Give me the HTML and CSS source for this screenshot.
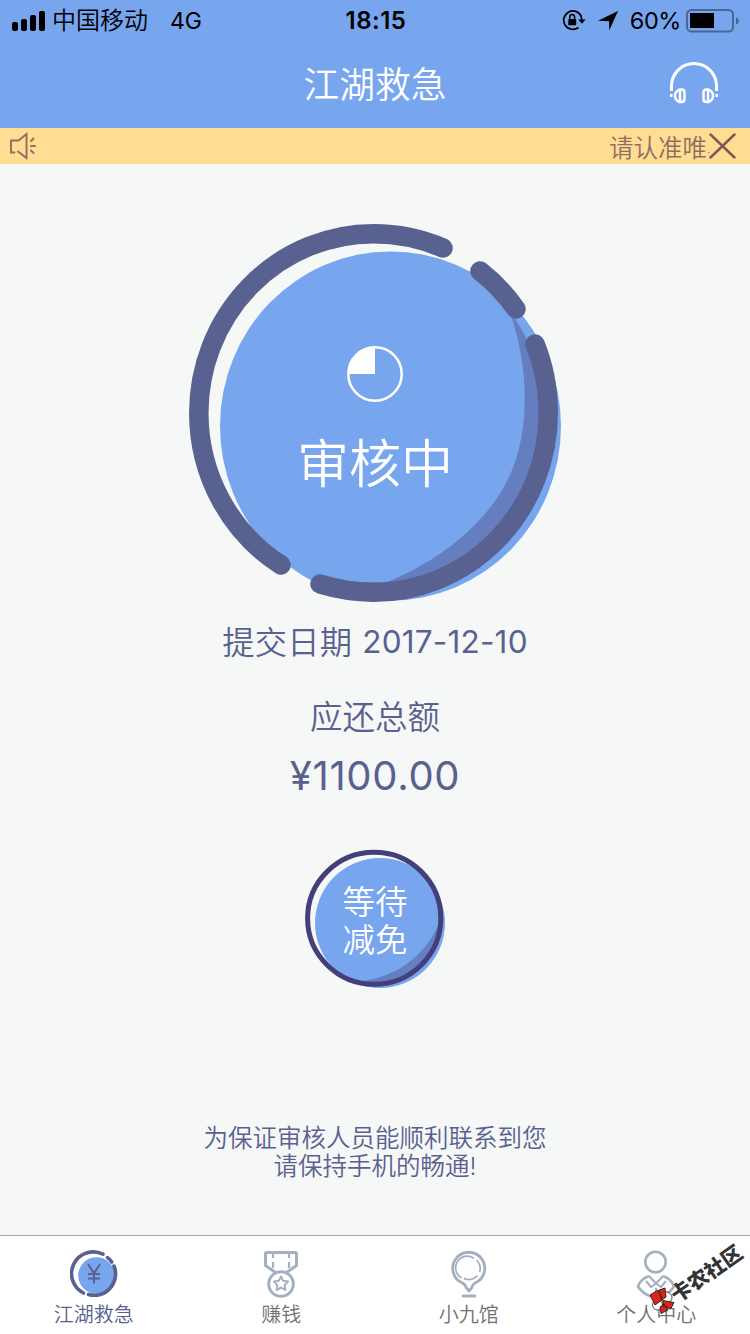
FILE: index.html
```html
<!DOCTYPE html>
<html lang="zh-CN">
<head>
<meta charset="utf-8">
<title>江湖救急</title>
<link rel="stylesheet" href="styles.css">
</head>
<body>
<div class="app">
  <header class="header">
    <div class="status">
      <div class="status-left">
        <svg class="signal" width="34" height="20" viewBox="0 0 34 20"><rect x="0" y="11" width="6" height="9" rx="2"/><rect x="9" y="8" width="6" height="12" rx="2"/><rect x="18" y="4" width="6" height="16" rx="2"/><rect x="27" y="0" width="6" height="20" rx="2"/></svg>
        <span class="carrier">中国移动</span>
        <span class="network">4G</span>
      </div>
      <div class="clock">18:15</div>
      <div class="status-right">
        <svg class="lock" width="24" height="22" viewBox="0 0 24 22"><path d="M19.2 6.2A9.2 9.2 0 1 0 16.5 17.5M17.6 3.8A9.2 9.2 0 0 1 19.7 10" fill="none" stroke="#000" stroke-width="1.7"/><path d="M16.2 9.4h7.4l-3.7 4.3z"/><rect x="6.2" y="9" width="8" height="6.3" rx="1"/><path d="M7.8 9.5V7a2.4 2.4 0 0 1 4.8 0v2.5" fill="none" stroke="#000" stroke-width="1.5"/></svg>
        <svg class="arrow" width="21" height="20" viewBox="0 0 21 20"><path d="M20 0 11.2 19.5V10.2L0 9.8z"/></svg>
        <span class="percent">60%</span>
        <svg class="battery" width="54" height="24" viewBox="0 0 54 24"><rect x="1" y="1" width="46" height="21.5" rx="4.5" fill="none" stroke="#496796" stroke-width="2"/><rect x="4" y="4" width="24" height="15"/><path d="M50 8.2c3.8 1 3.8 6.200 0 7.200z" fill="#496796"/></svg>
      </div>
    </div>
    <div class="titlebar">
      <h1 class="title">江湖救急</h1>
      <svg class="headset" width="50" height="44" viewBox="0 0 50 44" fill="none" stroke="#fff" stroke-width="3"><path d="M2.500 29V24a22.500 22.500 0 0 1 45 0v5"/><path d="M10.300 27.500h2.200q3 0 3 3v6.500q0 3-3 3h-2.200q-4.300-2-4.300-6.200t4.300-6.300zM11 27v13M39.700 27.500h-2.200q-3 0-3 3v6.500q0 3 3 3h2.200q4.300-2 4.300-6.200t-4.300-6.300zM39 27v13" stroke-width="2.500"/><path d="M1 33.500h2.500M46.500 33.500h2.500" stroke-width="3"/></svg>
    </div>
  </header>

  <div class="notice">
    <svg class="speaker" width="27" height="28" viewBox="0 0 27 28" fill="none" stroke="#8e6e60" stroke-width="1.900" stroke-linecap="round"><path d="M4.500 20.500H1V8.500h7.500L16.500 2v24L8 19.500"/><path d="m21 9 2.500-2.500M21 14h4M21 18.500l2.500 2.500"/></svg>
    <div class="marquee">请认准唯<span class="dot">·</span></div>
    <svg class="close" width="27" height="26" viewBox="0 0 27 26"><path d="m1.500 1.500 24 23M25.500 1.500l-24 23" stroke="#7c5b53" stroke-width="2.500" stroke-linecap="round"/></svg>
  </div>

  <main class="content">
    <section class="dial">
      <svg class="dial-art" width="374" height="380" viewBox="188 223 374 380">
        <ellipse cx="390.500" cy="426" rx="170.500" ry="174.500" fill="#77a6ee"/>
        <path d="M509 310C531 370 529 435 509 477C485 529 428 567 382 584C474 588 543 507 543.200 413C543.200 380 532 342 513 316z" fill="#657ebf"/>
        <g fill="none" stroke="#58618f" stroke-width="19.500" stroke-linecap="round"><path d="M281 565A174.700 179.300 0 0 1 198.800 413A174.700 179.300 0 0 1 373.500 233.700Q410 233.700 443 248"/><path d="M480 271A175 179.300 0 0 1 516 309"/><path d="M535 344Q548.200 376 548.200 413A174.700 179.300 0 0 1 373.500 592.300Q346 592 320 584"/></g>
      </svg>
      <div class="dial-label">
        <svg width="56" height="56" viewBox="0 0 56 56"><circle cx="28" cy="28" r="26.700" fill="none" stroke="#fff" stroke-width="2.500"/><path d="M28 28V1A27 27 0 0 0 1 28z" fill="#fff"/></svg>
        <strong class="state">审核中</strong>
      </div>
    </section>
    <p class="date"><span class="cn">提交日期</span><span>2017-12-10</span></p>
    <p class="due">应还总额</p>
    <p class="amount">¥1100.00</p>
    <button class="wait">
      <svg class="wait-art" width="142" height="140" viewBox="304 849 142 140"><circle cx="380" cy="923" r="65" fill="#77a6ee"/><path d="M361 981C397 978 429 953 441 918C440 963 401 990 361 981z" fill="#657ebf"/><ellipse cx="374.200" cy="918.300" rx="66.600" ry="66" fill="none" stroke="#443f7a" stroke-width="5"/></svg>
      <span class="wait-label">等待<br>减免</span>
    </button>
    <p class="tip">为保证审核人员能顺利联系到您<br>请保持手机的畅通!</p>
  </main>

  <nav class="tabs">
    <a class="tab active">
      <svg width="48" height="48" viewBox="0 0 48 48"><circle cx="26.500" cy="25.500" r="18.300" fill="#77a6ee"/><g fill="none" stroke="#58618f" stroke-width="3.600" stroke-linecap="round"><path d="M13.500 43A21.300 21.300 0 0 1 33 4.200"/><path d="M37.500 7.600Q40 9.400 41.800 12"/><path d="M44 16A21.300 21.300 0 0 1 18.500 44.500"/></g><path d="m18 14 6 9.500L30 14M24 23.500V33.500M18 24h12M18 28.500h12" fill="none" stroke="#58618f" stroke-width="2"/></svg>
      <span>江湖救急</span>
    </a>
    <a class="tab">
      <svg width="48" height="48" viewBox="0 0 48 48" fill="none" stroke="#a4afc1" stroke-width="3"><path d="M18.500 22.500 8.500 15.500V4q0-1.500 1.500-1.500h28q1.500 0 1.500 1.500v11.500l-10 7"/><path d="M16 4v4M16 12v6M32 4v4M32 12v6" stroke-width="2.200"/><circle cx="24" cy="34" r="12.300"/><path d="m24 26.500 2.200 4.300 4.900.8-3.500 3.500.8 4.900-4.400-2.300-4.400 2.300.8-4.900-3.500-3.500 4.900-.8z" stroke-width="2" stroke-linejoin="round"/></svg>
      <span>赚钱</span>
    </a>
    <a class="tab">
      <svg width="48" height="48" viewBox="0 0 48 48" fill="none" stroke="#a4afc1" stroke-width="2.800" stroke-linecap="round"><path d="M17.500 33a16 16 0 1 1 12.500 0Q28 34 26.500 38L24 41L21.500 38Q20 34 17.500 33z" stroke-linejoin="round"/><path d="M16 27.500A11.500 11.500 0 0 1 28.500 8M32 10.500a11.500 11.500 0 0 1 2.800 11M32 26a11.500 11.500 0 0 1-12.500 2.600" stroke-width="1.700"/><path d="M18 46h12"/></svg>
      <span>小九馆</span>
    </a>
    <a class="tab">
      <svg width="48" height="48" viewBox="0 0 48 48" fill="none" stroke="#a4afc1" stroke-width="2.600" stroke-linejoin="round"><circle cx="23.500" cy="12" r="10.200"/><path d="M17 26Q8.500 29 6 36.500Q10.500 43.500 19 46.500M31 26q8.500 3 11 10.500Q37.500 43.500 29 46.500"/><path d="M17 26l7 7.500-5 3.500-5-6M31 26l-7 7.500 5 3.500 5-6M24 38v8" stroke-width="2"/></svg>
      <span>个人中心</span>
    </a>
  </nav>

  <div class="watermark">
    <svg class="mark" width="28" height="30" viewBox="0 0 28 30"><circle cx="17.500" cy="11.500" r="5.500" fill="#fff" stroke="#222" stroke-width=".8"/><circle cx="8.500" cy="19" r="5" fill="#fff" stroke="#222" stroke-width=".8"/><path d="m1 9 8-5 4 10-7 5zM10 4l6-2 1 9-4 3zM14 14.500l11 2-3 6-8-2.500zM11 21l4-3 4 6-7 3.500z" fill="#dc241b" stroke="#222" stroke-width=".9"/></svg>
    <span class="mark-text">卡农社区</span>
  </div>
</div>
</body>
</html>
```
FILE: styles.css
```css
* { box-sizing: border-box; }
body { margin: 0; font-family: Inter, "Noto Sans CJK SC DemiLight", "Noto Sans CJK SC", sans-serif; }
h1, p { margin: 0; font-weight: 400; }
svg { display: block; flex: none; }

.app {
  position: relative;
  display: flex;
  flex-direction: column;
  width: 750px;
  height: 1334px;
  overflow: hidden;
  background: #f6f8f7;
  color: #58618f;
}

.header { height: 128px; background: #77a6ee; }
.status {
  display: grid;
  grid-template-columns: 1fr auto 1fr;
  align-items: center;
  height: 40px;
  padding: 0 10px 0 12px;
  color: #000;
  font-size: 24px;
  line-height: 40px;
}
.status span, .clock { padding-top: 1px; }
.status-left, .status-right { display: flex; align-items: center; }
.status-right { justify-content: flex-end; }
.carrier { margin-left: 6px; font-weight: 350; }
.network { margin-left: 22px; font-size: 23px; }
.clock { font-weight: 600; font-size: 24px; letter-spacing: 0.5px; }
.arrow { margin-left: 12px; }
.percent { margin-left: 11px; font-size: 23.5px; letter-spacing: -0.4px; }
.battery { margin-left: 5px; }

.titlebar {
  display: grid;
  grid-template-columns: 80px 1fr 80px;
  align-items: center;
  justify-items: center;
  height: 88px;
}
.title { grid-column: 2; padding-top: 2px; font-weight: 350; font-size: 35.8px; line-height: 50px; color: #fff; }
.headset { margin-right: 32px; }

.notice {
  display: flex;
  align-items: center;
  height: 36px;
  padding: 0 14px 0 10px;
  background: #ffde94;
  color: #8e6e60;
}
.marquee {
  width: 102px;
  padding-top: 4px;
  margin-left: auto;
  margin-right: -2px;
  white-space: nowrap;
  font-size: 24.5px;
  line-height: 36px;
  font-weight: 350;
}
.dot { font-size: 12px; line-height: 1; }

.content {
  flex: 1;
  display: flex;
  flex-direction: column;
  align-items: center;
  padding-top: 59px;
}
.dial, .wait { display: grid; justify-items: center; }
.dial-art, .dial-label, .wait-art, .wait-label { grid-area: 1 / 1; }
.dial-label {
  display: flex;
  flex-direction: column;
  align-items: center;
  padding-top: 123px;
  color: #fff;
}
.state { margin-top: 23px; font-size: 52px; line-height: 80px; font-weight: 350; }
.date {
  display: flex;
  gap: 10px;
  margin-top: 14px;
  font-size: 31.5px;
  line-height: 50px;
  letter-spacing: 0.2px;
}
.cn { padding-top: 1px; font-size: 32.3px; font-weight: 350; }
.due { margin-top: 26px; font-size: 32.5px; line-height: 48px; font-weight: 350; }
.amount { margin-top: 9px; font-size: 40px; line-height: 50px; letter-spacing: 0.7px; }
.wait {
  margin-top: 48px;
  padding: 0;
  border: 0;
  background: none;
  font: inherit;
  color: #fff;
}
.wait-label { padding-top: 35px; font-size: 32.5px; line-height: 38px; font-weight: 350; }
.tip { margin-top: 135px; text-align: center; font-size: 24.5px; line-height: 28px; font-weight: 350; }

.tabs {
  display: grid;
  grid-template-columns: repeat(4, 1fr);
  height: 99px;
  border-top: 1px solid #aaa;
  background: #fff;
}
.tab {
  display: flex;
  flex-direction: column;
  align-items: center;
  padding-top: 14px;
  font-size: 20px;
  line-height: 34px;
  font-weight: 350;
  color: #707070;
}
.tab.active { color: #58618f; }

.watermark { position: absolute; left: 649px; top: 1286px; }
.mark-text {
  position: absolute;
  left: 23px;
  top: -2px;
  font-family: "Noto Sans CJK SC", sans-serif;
  font-size: 20.5px;
  line-height: 24px;
  font-weight: 900;
  white-space: nowrap;
  color: #333;
  transform: rotate(-35deg);
  transform-origin: 0 50%;
}
```
